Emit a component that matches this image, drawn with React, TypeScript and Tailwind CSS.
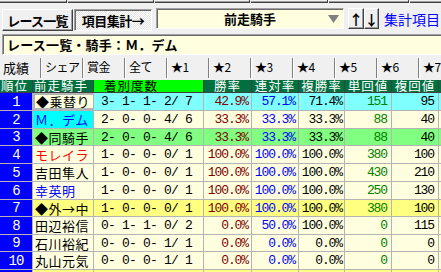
const jp = "font-['Noto_Sans_CJK_JP',sans-serif]";
const mono = "font-['Liberation_Mono','Noto_Sans_CJK_JP',monospace]";

type Row = {
    rank: number;
    name: string;
    rec: string;
    win: string;
    ren: string;
    fuku: string;
    tan: string;
    fk: string;
    bg: string;
    nameCls: string;
    h: string;
};

const rows: Row[] = [
    { rank: 1, name: '◆乗替り', rec: '3- 1- 1- 2/ 7', win: '42.9%', ren: '57.1%', fuku: '71.4%', tan: '151', fk: '95', bg: 'bg-[#80ffff]', nameCls: 'bg-[#ffffe0] text-black border-2 border-[#800000] pl-[1px]', h: 'h-[18px]' },
    { rank: 2, name: 'Ｍ．デム', rec: '2- 0- 0- 4/ 6', win: '33.3%', ren: '33.3%', fuku: '33.3%', tan: '88', fk: '40', bg: 'bg-[#ffffe0]', nameCls: 'bg-[#00ffff] text-[#0000ff] pl-[2px]', h: 'h-[18px]' },
    { rank: 3, name: '◆同騎手', rec: '2- 0- 0- 4/ 6', win: '33.3%', ren: '33.3%', fuku: '33.3%', tan: '88', fk: '40', bg: 'bg-[#80ff80]', nameCls: 'text-black pl-[2px]', h: 'h-[17px]' },
    { rank: 4, name: 'モレイラ', rec: '1- 0- 0- 0/ 1', win: '100.0%', ren: '100.0%', fuku: '100.0%', tan: '380', fk: '100', bg: 'bg-[#ffffe0]', nameCls: 'text-[#ff0000] pl-[2px]', h: 'h-[18px]' },
    { rank: 5, name: '吉田隼人', rec: '1- 0- 0- 0/ 1', win: '100.0%', ren: '100.0%', fuku: '100.0%', tan: '430', fk: '210', bg: 'bg-[#ffffe0]', nameCls: 'text-black pl-[2px]', h: 'h-[18px]' },
    { rank: 6, name: '幸英明', rec: '1- 0- 0- 0/ 1', win: '100.0%', ren: '100.0%', fuku: '100.0%', tan: '250', fk: '130', bg: 'bg-[#ffffe0]', nameCls: 'text-[#0000ff] pl-[2px]', h: 'h-[18px]' },
    { rank: 7, name: '◆外→中', rec: '1- 0- 0- 0/ 1', win: '100.0%', ren: '100.0%', fuku: '100.0%', tan: '380', fk: '100', bg: 'bg-[#ffff80]', nameCls: 'text-black pl-[2px]', h: 'h-[17px]' },
    { rank: 8, name: '田辺裕信', rec: '0- 1- 1- 0/ 2', win: '0.0%', ren: '50.0%', fuku: '100.0%', tan: '0', fk: '115', bg: 'bg-[#ffffe0]', nameCls: 'text-black pl-[2px]', h: 'h-[18px]' },
    { rank: 9, name: '石川裕紀', rec: '0- 0- 0- 1/ 1', win: '0.0%', ren: '0.0%', fuku: '0.0%', tan: '0', fk: '0', bg: 'bg-[#ffffe0]', nameCls: 'text-black pl-[2px]', h: 'h-[17px]' },
    { rank: 10, name: '丸山元気', rec: '0- 0- 0- 1/ 1', win: '0.0%', ren: '0.0%', fuku: '0.0%', tan: '0', fk: '0', bg: 'bg-[#ffffe0]', nameCls: 'text-black pl-[2px]', h: 'h-[18px]' },
    { rank: 11, name: '', rec: '', win: '', ren: '', fuku: '', tan: '', fk: '', bg: 'bg-[#ffff80]', nameCls: 'text-black pl-[2px]', h: 'h-[18px]' },
];

const tabs = ['シェア', '賞金', '全て', '★1', '★2', '★3', '★4', '★5', '★6', '★7'];
const topBtns = ['w-[67px]', 'w-[86px]', 'w-[95px]', 'w-[77px]', 'w-[80px]', 'w-[40px]'];

const raised = 'border border-t-white border-l-white border-b-[#404040] border-r-[#404040] shadow-[inset_-1px_-1px_0_#a0a0a0]';
const sunken = 'border border-t-[#a0a0a0] border-l-[#a0a0a0] border-b-white border-r-white shadow-[inset_1px_1px_0_#696969]';

function HeaderRow() {
    const dark = 'bg-[#007040] text-white border-r border-[#404040]';
    return (
        <div className={`flex h-[13px] leading-none text-[12.5px] tracking-[1px] overflow-hidden border-b border-[#404040] whitespace-nowrap ${jp}`}>
            <div className={`w-[33px] shrink-0 pl-[1px] flex items-center ${dark}`}>順位</div>
            <div className={`w-[61px] shrink-0 pl-[1px] flex items-center ${dark}`}>前走騎手</div>
            <div className="w-[110px] shrink-0 pl-[10px] flex items-center bg-[#00ff00] text-black border-r border-[#404040]">着別度数</div>
            <div className={`w-[48px] shrink-0 flex items-center justify-center ${dark}`}>勝率</div>
            <div className={`w-[47px] shrink-0 flex items-center justify-center ${dark}`}>連対率</div>
            <div className={`w-[46px] shrink-0 flex items-center justify-center ${dark}`}>複勝率</div>
            <div className={`w-[47px] shrink-0 flex items-center justify-center ${dark}`}>単回値</div>
            <div className={`w-[47px] shrink-0 flex items-center justify-center ${dark}`}>複回値</div>
            <div className="flex-1 bg-[#007040]"></div>
        </div>
    );
}

function DataRow({ r }: { r: Row }) {
    const cell = 'shrink-0 border-r border-[#b4b4b4] flex items-center overflow-hidden whitespace-pre leading-none';
    const num = `${mono} text-[13px] tracking-[-1.1px]`;
    return (
        <div className={`flex ${r.h} border-b border-[#b4b4b4] ${r.bg}`}>
            <div className={`${cell} w-[33px] justify-center bg-[#0000ff] text-white ${mono} text-[14px] tracking-[-0.8px]`}>{r.rank}</div>
            <div className={`${cell} w-[61px] text-[13px] tracking-[0.5px] ${jp} ${r.nameCls}`}>{r.name}</div>
            <div className={`${cell} w-[110px] pl-[7px] ${mono} text-[13px] tracking-[-0.8px]`}>{r.rec}</div>
            <div className={`${cell} w-[48px] justify-end pr-[3px] text-[#800000] ${num}`}>{r.win}</div>
            <div className={`${cell} w-[47px] justify-end pr-[3px] text-[#0000ff] ${num}`}>{r.ren}</div>
            <div className={`${cell} w-[46px] justify-end pr-[2px] text-black ${num}`}>{r.fuku}</div>
            <div className={`${cell} w-[47px] justify-end pr-[4px] text-[#008000] ${num}`}>{r.tan}</div>
            <div className={`${cell} w-[47px] justify-end pr-[4px] text-black ${num}`}>{r.fk}</div>
            <div className="flex-1"></div>
        </div>
    );
}

export default function App() {
    return (
        <div className={`w-[441px] h-[272px] overflow-hidden bg-[#f0f0f0] ${jp}`}>
            {/* cut-off buttons above */}
            <div className="flex h-[4px]">
                {topBtns.map((w, i) => (
                    <div key={i} className={`${w} shrink-0 h-[3px] mr-[1px] border-b border-r border-b-[#404040] border-r-[#404040] shadow-[inset_0_-1px_0_#a0a0a0]`}></div>
                ))}
            </div>

            {/* toolbar */}
            <div className="flex items-start h-[27px] pt-[4px] whitespace-nowrap">
                <div className={`ml-[2px] mt-[1px] w-[71px] h-[22px] shrink-0 flex items-center justify-center text-[13px] leading-none font-bold tracking-[-0.8px] text-black ${raised}`}>レース一覧</div>
                <div className={`ml-[1px] mt-[1px] w-[78px] h-[22px] shrink-0 flex items-center justify-center text-[13px] leading-none font-bold tracking-[-0.5px] text-black bg-[repeating-conic-gradient(#ffffff_0_25%,#e4e4e4_0_50%)] bg-[length:2px_2px] ${sunken}`}>項目集計→</div>
                <div className={`ml-[4px] w-[188px] h-[21px] shrink-0 relative flex items-center justify-center bg-[#ffffe0] text-[13px] leading-none font-bold text-black ${sunken}`}>
                    前走騎手
                    <svg className="absolute right-[4px] top-[6px]" width="11" height="8" viewBox="0 0 11 8">
                        <polygon points="0,0 11,0 5.5,8" fill="#808080" />
                    </svg>
                </div>
                <div className={`ml-[4px] w-[16px] h-[21px] shrink-0 flex items-center justify-center text-[14px] leading-none font-bold text-black ${raised}`}>↑</div>
                <div className={`w-[15px] h-[21px] shrink-0 flex items-center justify-center text-[14px] leading-none font-bold text-black ${raised}`}>↓</div>
                <div className="ml-[5px] h-[21px] flex items-center text-[14px] leading-none text-[#0000ff]">集計項目メニュー</div>
            </div>

            {/* title box */}
            <div className={`ml-[2px] mt-[3px] h-[21px] w-[460px] flex items-center pl-[4px] bg-[#ffffe0] text-[13px] leading-none font-bold text-black tracking-[0.2px] whitespace-nowrap ${sunken}`}>
                レース一覧・騎手：Ｍ．デム
            </div>

            {/* tabs */}
            <div className="flex h-[25px] items-stretch text-[12px] leading-none text-black whitespace-nowrap">
                <div className="w-[40px] shrink-0 pl-[3px] pt-[6px] text-[13px]">成績</div>
                {tabs.map((t) => (
                    <div key={t} className="w-[42px] shrink-0 mt-[3px] mb-[2px] pl-[4px] pt-[3px] border-l border-[#808080] shadow-[inset_1px_0_0_#ffffff] tracking-[-0.5px]">{t}</div>
                ))}
            </div>

            <HeaderRow />
            {rows.map((r) => (
                <DataRow key={r.rank} r={r} />
            ))}
        </div>
    );
}
